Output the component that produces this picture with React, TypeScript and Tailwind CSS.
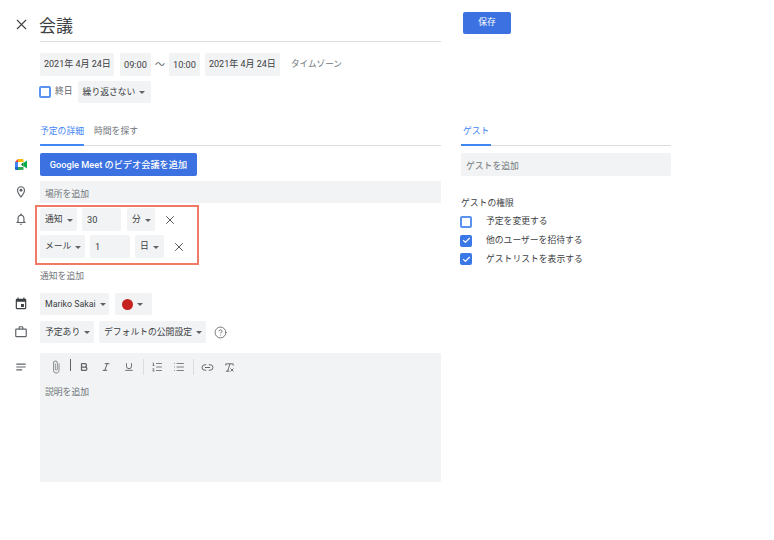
import React from "react";
import { X, HelpCircle, Bold, Italic, Underline, ListOrdered, List, Link2, RemoveFormatting, Check } from "lucide-react";

const Caret = () => <span className="inline-block ml-[4px] w-0 h-0 border-x-[3px] border-x-transparent border-t-[3px] border-t-[#5f6368]" />;

function Chip({
  className = "",
  children,
  caret = false,
  h = "h-[23px]",
  px = "px-[5px]",
  text = "text-[8.8px]",
}: {
  className?: string;
  children: React.ReactNode;
  caret?: boolean;
  h?: string;
  px?: string;
  text?: string;
}) {
  return (
    <div className={`${h} ${px} ${text} pt-[1px] bg-[#f1f3f4] rounded-[2px] flex items-center text-[#3c4043] whitespace-nowrap ${className}`}>
      {children}
      {caret && <Caret />}
    </div>
  );
}

function Row({ icon, className = "", children }: { icon?: React.ReactNode; className?: string; children: React.ReactNode }) {
  return (
    <div className={"flex " + className}>
      <div className="w-[40px] shrink-0 flex justify-center items-center pl-[2px] text-[#5f6368]">{icon}</div>
      <div className="w-[401px] flex items-center">{children}</div>
    </div>
  );
}

const Mat = ({ d, size = 14, className = "" }: { d: string; size?: number; className?: string }) => (
  <svg width={size} height={size} viewBox="0 0 24 24" fill="currentColor" className={className}>
    <path d={d} />
  </svg>
);

const MeetIcon = () => (
  <svg width="12" height="11" viewBox="0 0 12 11">
    <path d="M0 3 L3 0 V3 Z" fill="#ea4335" />
    <rect x="0" y="3" width="3" height="5" fill="#4285f4" />
    <path d="M0 8 H3 V11 H1 Q0 11 0 10 Z" fill="#1967d2" />
    <path d="M3 0 H7.5 Q8.5 0 8.5 1 V3 H3 Z" fill="#fbbc04" />
    <path d="M3 8 H8.5 V10 Q8.5 11 7.5 11 H3 Z" fill="#34a853" />
    <path d="M3 3 H6 V8 H3 Z" fill="#ffffff" />
    <path d="M6 5.5 L8.5 3 V8 Z" fill="#188038" />
    <path d="M8.5 4 L12 1.5 V9.5 L8.5 7 Z" fill="#00ac47" />
  </svg>
);

function Check1({ on }: { on: boolean }) {
  return on ? (
    <div className="-ml-[1px] w-[12px] h-[12px] rounded-[2px] bg-[#3b78e7] flex items-center justify-center">
      <Check size={9} strokeWidth={3} className="text-white" />
    </div>
  ) : (
    <div className="-ml-[1px] w-[12px] h-[12px] rounded-[2px] border-2 border-[#5a92f0] bg-white" />
  );
}

const Tool = ({ children }: { children: React.ReactNode }) => (
  <div className="w-[22px] flex justify-center text-[#5f6368]">{children}</div>
);

const Sep = ({ className = "" }: { className?: string }) => <div className={"w-px h-[16px] bg-[#dadce0] " + className} />;

export default function App() {
  return (
    <div
      className="w-[774px] h-[540px] bg-white overflow-hidden flex text-[#3c4043]"
      style={{ fontFamily: 'Roboto, "Noto Sans CJK JP", sans-serif' }}
    >
      <div className="w-[441px] shrink-0 flex flex-col">
        <Row icon={<X size={17} strokeWidth={1.5} className="text-[#3c4043] mb-[2px]" />} className="h-[42px] pt-[8px]">
          <div className="w-full h-full border-b border-[#dadce0] flex items-center text-[17px] text-[#3c4043] leading-none pt-[3px]">
            <span className="-ml-[1px]">会議</span>
          </div>
        </Row>

        <Row className="mt-[11px]">
          <Chip className="w-[74px]" px="px-[4px]" text="text-[9px]">2021年 4月 24日</Chip>
          <Chip className="w-[31px] ml-[6px]" px="px-[4px]" text="text-[9.2px]">09:00</Chip>
          <span className="w-[18px] text-center text-[10px] text-[#5f6368]">～</span>
          <Chip className="w-[31px]" px="px-[4px]" text="text-[9.2px]">10:00</Chip>
          <Chip className="w-[75px] ml-[5px]" px="px-[4px]" text="text-[9px]">2021年 4月 24日</Chip>
          <span className="ml-[11px] text-[8.6px] text-[#70757a] whitespace-nowrap">タイムゾーン</span>
        </Row>

        <Row className="mt-[5px]">
          <Check1 on={false} />
          <span className="ml-[4px] text-[8.8px] text-[#5f6368]">終日</span>
          <Chip className="ml-[5px] w-[73px]" h="h-[22px]" caret>繰り返さない</Chip>
        </Row>

        <Row className="mt-[20px]">
          <div className="w-full h-[23px] border-b border-[#dadce0] flex text-[8.8px] whitespace-nowrap">
            <div className="w-[44px] h-[23px] border-b-2 border-[#4285f4] rounded-b-[1px] text-[#4285f4] pt-[2px]">予定の詳細</div>
            <div className="ml-[10px] text-[#70757a] pt-[2px]">時間を探す</div>
          </div>
        </Row>

        <Row icon={<MeetIcon />} className="mt-[7px]">
          <div className="w-[157px] h-[23px] rounded-[2px] bg-[#3b71e0] text-white text-[9.2px] font-medium flex items-center justify-center whitespace-nowrap">
            Google Meet のビデオ会議を追加
          </div>
        </Row>

        <Row
          icon={
            <svg width="14" height="14" viewBox="0 0 24 24" fill="currentColor">
              <path d="M12 2C8.13 2 5 5.13 5 9c0 5.25 7 13 7 13s7-7.75 7-13c0-3.87-3.13-7-7-7zM7 9c0-2.76 2.24-5 5-5s5 2.24 5 5c0 2.88-2.88 7.19-5 9.88C9.92 16.21 7 11.85 7 9z" />
              <circle cx="12" cy="9" r="2.5" />
            </svg>
          }
          className="mt-[5px]"
        >
          <div className="w-full h-[22px] bg-[#f1f3f4] flex items-center px-[5px] pt-[5px] text-[8.8px] text-[#70757a]">場所を追加</div>
        </Row>

        <Row
          icon={
            <Mat
              size={14}
              className="mb-[33px]"
              d="M12 22c1.1 0 2-.9 2-2h-4c0 1.1.9 2 2 2zm6-6v-5c0-3.07-1.63-5.64-4.5-6.32V4c0-.83-.67-1.5-1.5-1.5s-1.5.67-1.5 1.5v.68C7.64 5.36 6 7.92 6 11v5l-2 2v1h16v-1l-2-2zm-2 1H8v-6c0-2.48 1.51-4.5 4-4.5s4 2.02 4 4.5v6z"
            />
          }
          className="mt-[2px]"
        >
          <div className="-ml-[5px] w-[164px] h-[60px] border-2 border-[#f07a66] flex flex-col pl-[3px] pt-[1px]">
            <div className="flex items-center h-[23px]">
              <Chip className="w-[37px]" caret>通知</Chip>
              <Chip className="w-[39px] ml-[5px]" text="text-[9.2px]">30</Chip>
              <Chip className="w-[28px] ml-[6px]" caret>分</Chip>
              <X size={14} strokeWidth={1.5} className="ml-[8px] text-[#3c4043]" />
            </div>
            <div className="flex items-center h-[23px] mt-[4px]">
              <Chip className="w-[45px]" caret>メール</Chip>
              <Chip className="w-[40px] ml-[5px]" text="text-[9.2px]">1</Chip>
              <Chip className="w-[29px] ml-[5px]" caret>日</Chip>
              <X size={14} strokeWidth={1.5} className="ml-[8px] text-[#3c4043]" />
            </div>
          </div>
        </Row>

        <Row className="h-[20px]">
          <span className="text-[8.8px] text-[#70757a] pt-[3px]">通知を追加</span>
        </Row>

        <Row
          icon={
            <Mat
              size={14}
              className="text-[#3c4043]"
              d="M17 12h-5v5h5v-5zM16 1v2H8V1H6v2H5c-1.11 0-1.99.9-1.99 2L3 19c0 1.1.89 2 2 2h14c1.1 0 2-.9 2-2V5c0-1.1-.9-2-2-2h-1V1h-2zm3 18H5V8h14v11z"
            />
          }
          className="mt-[8px]"
        >
          <Chip className="w-[69px]" h="h-[22px]" caret>Mariko Sakai</Chip>
          <Chip className="w-[37px] ml-[6px]" h="h-[22px]" caret>
            <span className="ml-[2px] w-[11px] h-[11px] rounded-full bg-[#c5221f]" />
          </Chip>
        </Row>

        <Row
          icon={
            <Mat
              size={14}
              d="M14 6V4h-4v2h4zM4 8v11h16V8H4zm16-2c1.11 0 2 .89 2 2v11c0 1.11-.89 2-2 2H4c-1.11 0-2-.89-2-2l.01-11c0-1.11.88-2 1.99-2h4V4c0-1.11.89-2 2-2h4c1.11 0 2 .89 2 2v2h4z"
            />
          }
          className="mt-[6px]"
        >
          <Chip className="w-[54px]" h="h-[22px]" caret>予定あり</Chip>
          <Chip className="w-[107px] ml-[5px]" h="h-[22px]" caret>デフォルトの公開設定</Chip>
          <HelpCircle size={13} strokeWidth={1.6} className="ml-[8px] text-[#5f6368]" />
        </Row>

        <div className="flex mt-[10px]">
          <div className="w-[40px] shrink-0 flex justify-center pl-[2px] pt-[7px] text-[#5f6368]">
            <Mat size={14} d="M4 6h16v2H4zM4 11h16v2H4zM4 16h10v2H4z" />
          </div>
          <div className="w-[401px] h-[129px] bg-[#f1f3f4] rounded-[1px] flex flex-col">
            <div className="flex items-center h-[28px] pl-[5px]">
              <Tool>
                <Mat
                  size={14}
                  className="text-[#80868b]"
                  d="M16.5 6v11.5c0 2.21-1.79 4-4 4s-4-1.79-4-4V5c0-1.38 1.12-2.5 2.5-2.5s2.5 1.12 2.5 2.5v10.5c0 .55-.45 1-1 1s-1-.45-1-1V6H10v9.5c0 1.38 1.12 2.5 2.5 2.5s2.5-1.12 2.5-2.5V5c0-2.21-1.79-4-4-4S7 2.79 7 5v12.5c0 3.04 2.46 5.5 5.5 5.5s5.5-2.46 5.5-5.5V6h-1.5z"
                />
              </Tool>
              <div className="w-px h-[12px] bg-[#5f6368] ml-[3px] mb-[5px]" />
              <div className="ml-[2px]" />
              <Tool><Bold size={10} strokeWidth={3} /></Tool>
              <Tool><Italic size={10} strokeWidth={2.4} /></Tool>
              <div className="ml-[1px]" />
              <Tool><Underline size={10} strokeWidth={2.2} /></Tool>
              <Sep className="ml-[3px]" />
              <div className="ml-[2px]" />
              <Tool><ListOrdered size={12} strokeWidth={1.6} /></Tool>
              <Tool><List size={12} strokeWidth={1.6} /></Tool>
              <Sep className="ml-[3px]" />
              <div className="ml-[2px]" />
              <Tool><Link2 size={13} strokeWidth={1.8} /></Tool>
              <Tool><RemoveFormatting size={11} strokeWidth={2} /></Tool>
            </div>
            <div className="pl-[5px] mt-[5px] text-[8.8px] text-[#70757a]">説明を追加</div>
          </div>
        </div>
      </div>

      <div className="ml-[20px] w-[210px] flex flex-col">
        <div className="ml-[2px] mt-[12px] w-[48px] h-[22px] rounded-[2px] bg-[#3b71e0] text-white text-[8.8px] flex items-center justify-center">保存</div>

        <div className="mt-[89px] h-[23px] border-b border-[#dadce0] text-[8.8px] whitespace-nowrap">
          <div className="w-[30px] h-[23px] border-b-2 border-[#4285f4] text-[#4285f4] pl-[2px] pt-[2px]">ゲスト</div>
        </div>
        <div className="mt-[7px] h-[23px] bg-[#f1f3f4] rounded-[2px] flex items-center px-[5px] pt-[5px] text-[8.8px] text-[#70757a]">ゲストを追加</div>
        <div className="mt-[20px] text-[8.8px] text-[#3c4043] leading-[14px]">ゲストの権限</div>
        <div className="mt-[6px] flex flex-col gap-[6.7px]">
          {[
            [false, "予定を変更する"],
            [true, "他のユーザーを招待する"],
            [true, "ゲストリストを表示する"],
          ].map(([on, t]) => (
            <div key={t as string} className="flex items-center h-[12px]">
              <Check1 on={on as boolean} />
              <span className="ml-[14px] text-[8.8px] text-[#3c4043]">{t as string}</span>
            </div>
          ))}
        </div>
      </div>
    </div>
  );
}
